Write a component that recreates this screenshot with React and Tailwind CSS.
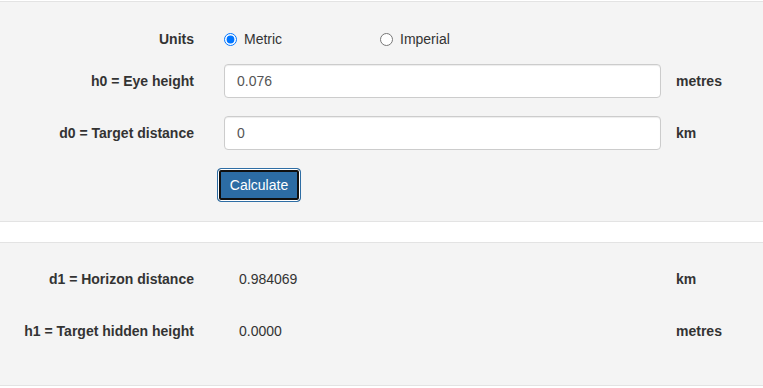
import { useState } from 'react'

const font = { fontFamily: '"Liberation Sans", Arial, sans-serif' }

function FieldRow({ label, value, onChange, unit }) {
  return (
    <div className="flex items-center h-[34px]">
      <label className="w-[194px] text-right font-bold text-[14px] text-[#333]">{label}</label>
      <input
        type="text"
        value={value}
        onChange={(e) => onChange(e.target.value)}
        className="ml-[30px] w-[437px] h-[34px] px-3 bg-white border border-[#ccc] rounded-[4px] text-[14px] text-[#555] shadow-[inset_0_1px_1px_rgba(0,0,0,0.075)] outline-none"
        style={font}
      />
      <span className="ml-[15px] font-bold text-[14px] text-[#333]">{unit}</span>
    </div>
  )
}

function ResultRow({ label, value, unit }) {
  return (
    <div className="flex items-center h-[34px]">
      <span className="w-[194px] text-right font-bold text-[14px] text-[#333]">{label}</span>
      <span className="ml-[30px] w-[437px] pl-[15px] text-[14px] text-[#333]">{value}</span>
      <span className="ml-[15px] font-bold text-[14px] text-[#333]">{unit}</span>
    </div>
  )
}

export default function App() {
  const [units, setUnits] = useState('metric')
  const [h0, setH0] = useState('0.076')
  const [d0, setD0] = useState('0')

  return (
    <div className="w-[763px] h-[388px] bg-white overflow-hidden" style={font}>

      {/* Input panel */}
      <div className="mt-px bg-[#f4f4f4] border-y border-[#e3e3e3] pt-5 pb-[19px]">
        <div className="flex items-center h-[34px]">
          <span className="w-[194px] text-right font-bold text-[14px] text-[#333]">Units</span>
          <label className="ml-[30px] w-[156px] flex items-center gap-[7px] text-[14px] text-[#333]">
            <input
              type="radio"
              name="units"
              checked={units === 'metric'}
              onChange={() => setUnits('metric')}
              className="w-[13px] h-[13px] m-0 accent-[#0075ff]"
            />
            Metric
          </label>
          <label className="flex items-center gap-[7px] text-[14px] text-[#333]">
            <input
              type="radio"
              name="units"
              checked={units === 'imperial'}
              onChange={() => setUnits('imperial')}
              className="w-[13px] h-[13px] m-0 accent-[#0075ff]"
            />
            Imperial
          </label>
        </div>

        <div className="mt-2">
          <FieldRow label="h0 = Eye height" value={h0} onChange={setH0} unit="metres" />
        </div>
        <div className="mt-[18px]">
          <FieldRow label="d0 = Target distance" value={d0} onChange={setD0} unit="km" />
        </div>

        <div className="mt-[18px] flex h-[34px]">
          <button
            className="ml-[217px] w-[84px] h-[34px] rounded-[4px] border border-[#2e6da4] bg-[#2c6ca4] text-white text-[14px] shadow-[inset_0_0_0_1px_#fff,inset_0_0_0_3px_#101010]"
            style={font}
          >
            Calculate
          </button>
        </div>
      </div>

      {/* Results panel */}
      <div className="mt-5 bg-[#f4f4f4] border-y border-[#e3e3e3] pt-[19px] pb-[37px]">
        <ResultRow label="d1 = Horizon distance" value="0.984069" unit="km" />
        <div className="mt-[18px]">
          <ResultRow label="h1 = Target hidden height" value="0.0000" unit="metres" />
        </div>
      </div>
    </div>
  )
}
